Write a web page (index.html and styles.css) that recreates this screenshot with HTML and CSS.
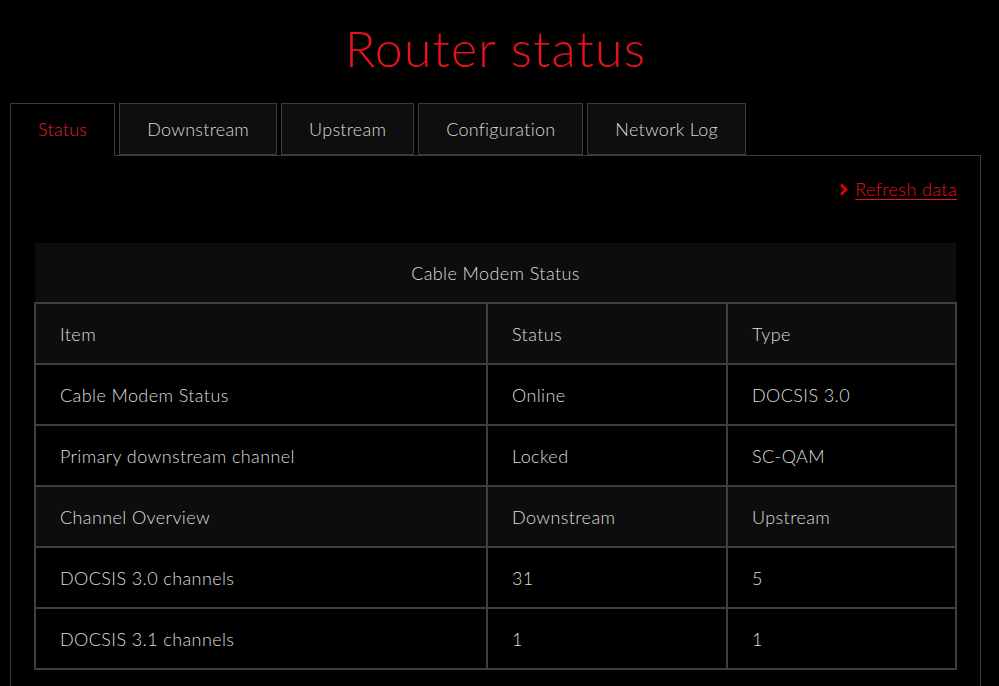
FILE: index.html
```html
<!DOCTYPE html>
<html lang="en">
<head>
    <meta charset="UTF-8">
    <meta name="viewport" content="width=device-width, initial-scale=1.0">
    <title>Router status</title>
    <link rel="stylesheet" href="styles.css">
</head>
<body>
    <h1 class="page-title">Router status</h1>

    <div class="tabs">
        <div class="tab active">Status</div>
        <div class="tab">Downstream</div>
        <div class="tab">Upstream</div>
        <div class="tab">Configuration</div>
        <div class="tab">Network Log</div>
    </div>

    <div class="panel">
        <div class="refresh-row">
            <a class="refresh" href="#">
                <svg width="9" height="13" viewBox="0 0 9 13"><path d="M2 1.5 L7 6.5 L2 11.5" fill="none" stroke="#e60000" stroke-width="2.6"/></svg>
                <span>Refresh data</span>
            </a>
        </div>

        <table class="status-table">
            <colgroup>
                <col class="col-item">
                <col class="col-status">
                <col>
            </colgroup>
            <tr class="caption-row">
                <th colspan="3">Cable Modem Status</th>
            </tr>
            <tr class="head-row">
                <th>Item</th>
                <th>Status</th>
                <th>Type</th>
            </tr>
            <tr>
                <td>Cable Modem Status</td>
                <td>Online</td>
                <td>DOCSIS 3.0</td>
            </tr>
            <tr>
                <td>Primary downstream channel</td>
                <td>Locked</td>
                <td>SC-QAM</td>
            </tr>
            <tr class="head-row">
                <th>Channel Overview</th>
                <th>Downstream</th>
                <th>Upstream</th>
            </tr>
            <tr>
                <td>DOCSIS 3.0 channels</td>
                <td>31</td>
                <td>5</td>
            </tr>
            <tr>
                <td>DOCSIS 3.1 channels</td>
                <td>1</td>
                <td>1</td>
            </tr>
        </table>
    </div>
</body>
</html>
```

FILE: styles.css
```css
body {
    margin: 0;
    padding: 0 18px 0 10px;
    background: #000;
    color: #dcdcdc;
    font-family: Lato, "Liberation Sans", sans-serif;
    font-weight: 300;
}
.page-title {
    margin: 15px 0 22px;
    text-align: center;
    color: #e8121b;
    font-size: 50px;
    font-weight: 300;
    line-height: 66px;
    letter-spacing: 1.2px;
}
.tabs {
    display: flex;
    gap: 4px;
}
.tab {
    height: 50px;
    line-height: 50px;
    padding: 0 27px;
    background: #0e0e0e;
    border: 1px solid #3c3c3c;
    font-size: 18px;
    letter-spacing: 0.25px;
    color: #dadada;
}
.tab.active {
    background: #000;
    color: #e0202a;
    border-bottom: none;
    height: 52px;
    margin-bottom: -1px;
    position: relative;
    z-index: 1;
}
.panel {
    border: 1px solid #3c3c3c;
    padding: 17px 23px 40px;
}
.refresh-row {
    display: flex;
    justify-content: flex-end;
    height: 70px;
}
.refresh {
    display: flex;
    align-items: center;
    gap: 7px;
    height: 32px;
    color: #e8121b;
    font-size: 18px;
    letter-spacing: 0.4px;
    text-decoration: none;
}
.refresh span {
    text-decoration: underline;
    text-underline-offset: 3px;
}
.status-table {
    width: 100%;
    table-layout: fixed;
    border-collapse: collapse;
    font-size: 18px;
    letter-spacing: 0.4px;
}
.status-table th,
.status-table td {
    height: 59px;
    padding: 0 24px;
    text-align: left;
    font-weight: 300;
    color: #dedede;
    border: 2px solid #3e3e3e;
}
.caption-row th {
    text-align: center;
    background: #0d0d0d;
    border-top: none;
    border-left: none;
    border-right: none;
}
.head-row th {
    background: #0d0d0d;
}
.col-item { width: 452px; }
.col-status { width: 240px; }
```
